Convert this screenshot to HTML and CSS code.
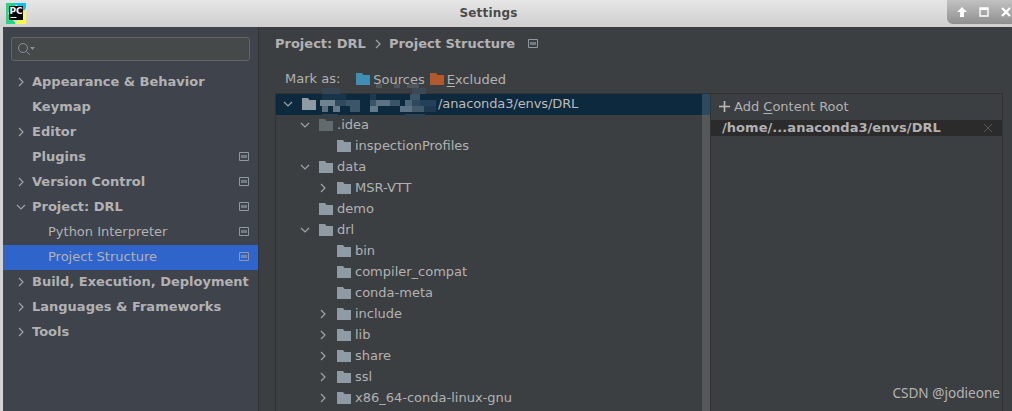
FILE: index.html
```html
<!DOCTYPE html>
<html lang="en">
<head>
    <meta charset="UTF-8">
    <title>Settings</title>
    <link rel="stylesheet" href="styles.css">
</head>
<body>
    <svg class="icon-defs" width="0" height="0">
        <symbol id="folder" viewBox="0 0 14 12"><path d="M0 0H6L7.500 2H14V12H0Z" fill="currentColor"/></symbol>
        <symbol id="right" viewBox="0 0 10 10"><path d="M3 1L7 5L3 9" fill="none" stroke="currentColor" stroke-width="1.2"/></symbol>
        <symbol id="down" viewBox="0 0 10 10"><path d="M1 3L5 7L9 3" fill="none" stroke="currentColor" stroke-width="1.2"/></symbol>
        <symbol id="scope" viewBox="0 0 10 9"><path d="M.5.5H9.5V8.500H.5Z" fill="none" stroke="currentColor"/><path d="M2 3H8V6H2Z" fill="currentColor" opacity=".65"/></symbol>
    </svg>

    <header class="titlebar">
        <svg class="logo" width="20" height="21" viewBox="0 0 20 21">
            <path d="M0 0H12L0 12Z" fill="#21d789"/>
            <path d="M0 8V21H10Z" fill="#21d789"/>
            <path d="M8 0H20V9Z" fill="#07c3f2"/>
            <path d="M20 5V21H9Z" fill="#fcf84a"/>
            <rect x="3" y="3" width="14" height="14" fill="#000"/>
            <text x="3.500" y="11" class="logo-text">PC</text>
            <rect x="4.500" y="14" width="6" height="1" fill="#fff"/>
        </svg>
        <div class="title">Settings</div>
        <div class="window-controls">
            <svg width="12" height="12" viewBox="0 0 12 12"><path d="M6 1L11 6H8V11H4V6H1Z" fill="#fff"/></svg>
            <svg width="12" height="12" viewBox="0 0 12 12"><path d="M2 2H10V10H2Z" fill="none" stroke="#fff" stroke-width="1.4"/><path d="M2 3H10" stroke="#fff" stroke-width="2"/></svg>
            <svg width="12" height="12" viewBox="0 0 12 12"><path d="M2 2L10 10M10 2L2 10" stroke="#fff" stroke-width="2.4"/></svg>
        </div>
    </header>

    <div class="window">
        <aside class="sidebar">
            <div class="search">
                <svg width="18" height="14" viewBox="0 0 18 14"><circle cx="6" cy="6" r="4.500" fill="none" stroke="#8b8e90" stroke-width="1"/><path d="M9.500 9.500L13 13" stroke="#8b8e90"/><path d="M13 5H18L15.500 8Z" fill="#8b8e90"/></svg>
            </div>
            <ul class="nav">
                <li class="nav-row group"><svg class="arrow"><use href="#right"/></svg>Appearance &amp; Behavior</li>
                <li class="nav-row group"><span class="arrow"></span>Keymap</li>
                <li class="nav-row group"><svg class="arrow"><use href="#right"/></svg>Editor</li>
                <li class="nav-row group"><span class="arrow"></span>Plugins<svg class="scope"><use href="#scope"/></svg></li>
                <li class="nav-row group"><svg class="arrow"><use href="#right"/></svg>Version Control<svg class="scope"><use href="#scope"/></svg></li>
                <li class="nav-row group"><svg class="arrow"><use href="#down"/></svg>Project: DRL<svg class="scope"><use href="#scope"/></svg></li>
                <li class="nav-row child">Python Interpreter<svg class="scope"><use href="#scope"/></svg></li>
                <li class="nav-row child selected">Project Structure<svg class="scope"><use href="#scope"/></svg></li>
                <li class="nav-row group"><svg class="arrow"><use href="#right"/></svg>Build, Execution, Deployment</li>
                <li class="nav-row group"><svg class="arrow"><use href="#right"/></svg>Languages &amp; Frameworks</li>
                <li class="nav-row group"><svg class="arrow"><use href="#right"/></svg>Tools</li>
            </ul>
        </aside>

        <main class="content">
            <div class="breadcrumb">
                <span>Project: DRL</span>
                <svg class="crumb-sep"><use href="#right"/></svg>
                <span>Project Structure</span>
                <svg class="scope crumb-scope"><use href="#scope"/></svg>
            </div>

            <div class="markbar">
                <span class="mark-label">Mark as:</span>
                <svg class="folder sources"><use href="#folder"/></svg>
                <span class="mark-sources">Sources</span>
                <svg class="folder excluded"><use href="#folder"/></svg>
                <span><u>E</u>xcluded</span>
            </div>

            <div class="panels">
                <div class="tree">
                    <div class="tree-row root">
                        <svg class="arrow"><use href="#down"/></svg>
                        <svg class="folder"><use href="#folder"/></svg>
                        <span class="root-path">/anaconda3/envs/DRL</span>
                    </div>
                    <div class="tree-row lvl1"><svg class="arrow"><use href="#down"/></svg><svg class="folder dim"><use href="#folder"/></svg>.idea</div>
                    <div class="tree-row lvl2"><span class="arrow"></span><svg class="folder"><use href="#folder"/></svg>inspectionProfiles</div>
                    <div class="tree-row lvl1"><svg class="arrow"><use href="#down"/></svg><svg class="folder"><use href="#folder"/></svg>data</div>
                    <div class="tree-row lvl2"><svg class="arrow"><use href="#right"/></svg><svg class="folder"><use href="#folder"/></svg>MSR-VTT</div>
                    <div class="tree-row lvl1"><span class="arrow"></span><svg class="folder"><use href="#folder"/></svg>demo</div>
                    <div class="tree-row lvl1"><svg class="arrow"><use href="#down"/></svg><svg class="folder"><use href="#folder"/></svg>drl</div>
                    <div class="tree-row lvl2"><span class="arrow"></span><svg class="folder"><use href="#folder"/></svg>bin</div>
                    <div class="tree-row lvl2"><span class="arrow"></span><svg class="folder"><use href="#folder"/></svg>compiler_compat</div>
                    <div class="tree-row lvl2"><span class="arrow"></span><svg class="folder"><use href="#folder"/></svg>conda-meta</div>
                    <div class="tree-row lvl2"><svg class="arrow"><use href="#right"/></svg><svg class="folder"><use href="#folder"/></svg>include</div>
                    <div class="tree-row lvl2"><svg class="arrow"><use href="#right"/></svg><svg class="folder"><use href="#folder"/></svg>lib</div>
                    <div class="tree-row lvl2"><svg class="arrow"><use href="#right"/></svg><svg class="folder"><use href="#folder"/></svg>share</div>
                    <div class="tree-row lvl2"><svg class="arrow"><use href="#right"/></svg><svg class="folder"><use href="#folder"/></svg>ssl</div>
                    <div class="tree-row lvl2"><svg class="arrow"><use href="#right"/></svg><svg class="folder"><use href="#folder"/></svg>x86_64-conda-linux-gnu</div>

                    <!-- pixelated blur over the private part of the path -->
                    <svg class="mosaic" width="130" height="36" viewBox="315 84 130 36">
                        <rect x="322" y="88" width="18" height="6" fill="#37454f"/>
                        <rect x="376" y="84" width="6" height="4" fill="#4f5558"/>
                        <rect x="394" y="84" width="6" height="4" fill="#4f5558"/>
                        <rect x="407" y="84" width="12" height="4" fill="#4f5558"/>
                        <rect x="412" y="88" width="14" height="6" fill="#3b4a55"/>
                        <rect x="322" y="94" width="24" height="6" fill="#18344a"/>
                        <rect x="370" y="94" width="6" height="6" fill="#1d3a50"/>
                        <rect x="410" y="94" width="10" height="6" fill="#3d5367"/>
                        <rect x="320" y="100" width="15" height="6" fill="#6f8391"/>
                        <rect x="335" y="100" width="25" height="6" fill="#2f4a5e"/>
                        <rect x="346" y="100" width="14" height="6" fill="#3c5568"/>
                        <rect x="370" y="100" width="6" height="6" fill="#3a5568"/>
                        <rect x="376" y="100" width="14" height="6" fill="#5d7282"/>
                        <rect x="390" y="100" width="10" height="6" fill="#3a5568"/>
                        <rect x="405" y="100" width="7" height="6" fill="#4d6678"/>
                        <rect x="412" y="100" width="8" height="6" fill="#30485c"/>
                        <rect x="420" y="100" width="16" height="6" fill="#24405a"/>
                        <rect x="322" y="106" width="6" height="6" fill="#5a6f7f"/>
                        <rect x="333" y="106" width="7" height="6" fill="#64798a"/>
                        <rect x="350" y="106" width="10" height="6" fill="#3c5568"/>
                        <rect x="370" y="106" width="8" height="6" fill="#64798a"/>
                        <rect x="400" y="106" width="12" height="6" fill="#5d7282"/>
                        <rect x="412" y="106" width="12" height="6" fill="#44596c"/>
                        <rect x="424" y="106" width="12" height="6" fill="#1f3a50"/>
                        <rect x="322" y="114" width="16" height="4" fill="#353f47"/>
                        <rect x="405" y="114" width="20" height="4" fill="#2f3f4c"/>
                    </svg>
                </div>
                <div class="scrollbar"><div class="thumb"></div></div>
                <div class="roots">
                    <div class="add-root">
                        <svg class="plus" width="11" height="11" viewBox="0 0 11 11"><path d="M5.500 0V11M0 5.500H11" stroke="#bbb" stroke-width="1.600"/></svg>
                        <span>Add <u>C</u>ontent Root</span>
                    </div>
                    <div class="root-entry">
                        <span>/home/...anaconda3/envs/DRL</span>
                        <svg width="10" height="10" viewBox="0 0 10 10"><path d="M1 1L9 9M9 1L1 9" stroke="#55585a" stroke-width="1"/></svg>
                    </div>
                </div>
            </div>
        </main>
    </div>

    <div class="watermark">CSDN @jodieone</div>
</body>
</html>
```

FILE: styles.css
```css
* {
    box-sizing: border-box;
}

html,
body {
    height: 100%;
}

body {
    margin: 0;
    overflow: hidden;
    background: #3c3f41;
    color: #b2b2b2;
    font-family: "DejaVu Sans", sans-serif;
    font-size: 13px;
    display: flex;
    flex-direction: column;
}

.icon-defs {
    position: absolute;
}

u {
    text-underline-offset: 2px;
}

/* title bar */
.titlebar {
    height: 27px;
    flex: none;
    display: flex;
    align-items: flex-start;
    padding-left: 6px;
    background: linear-gradient(#e6e6e6, #cfcfcf);
}

.logo {
    margin-top: 3px;
    flex: none;
}

.logo-text {
    font-size: 9px;
    font-weight: bold;
    fill: #fff;
}

.title {
    flex: 1;
    text-align: center;
    margin-top: 6px;
    padding-left: 4px;
    font-size: 12px;
    font-weight: bold;
    letter-spacing: 0.2px;
    color: #4a4a4a;
}

.window-controls {
    width: 65px;
    height: 24px;
    flex: none;
    display: flex;
    align-items: center;
    gap: 10px;
    padding-left: 9px;
    background: linear-gradient(#c2c2c2, #8f8f8f);
    border-bottom-left-radius: 6px;
}

/* main window */
.window {
    flex: 1;
    min-height: 0;
    display: flex;
    border-left: 3px solid #d4d4d4;
}

.sidebar {
    width: 256px;
    flex: none;
    padding: 10px 8px 0 0;
    background: #3e434c;
    border-right: 1px solid #333539;
}

.search {
    height: 24px;
    margin-left: 8px;
    display: flex;
    align-items: center;
    padding-left: 5px;
    background: #45494a;
    border: 1px solid #646464;
    border-radius: 3px;
}

.nav {
    list-style: none;
    margin: 9px -8px 0 0;
    padding: 0;
}

.nav-row {
    height: 25px;
    display: flex;
    align-items: center;
    padding-right: 9px;
    padding-bottom: 2px;
    white-space: nowrap;
}

.group {
    padding-left: 13px;
    font-weight: bold;
}

.child {
    padding-left: 45px;
}

.selected {
    background: #2f65ca;
}

.arrow {
    width: 10px;
    height: 10px;
    flex: none;
    margin-right: 6px;
    color: #a0a3a5;
}

.scope {
    width: 10px;
    height: 9px;
    margin-left: auto;
    flex: none;
    color: #8f99a3;
}

/* right side */
.content {
    flex: 1;
    min-width: 0;
    padding: 0 9px 0 16px;
}

.breadcrumb {
    height: 34px;
    display: flex;
    align-items: center;
    font-weight: bold;
    padding-bottom: 1px;
}

.crumb-sep {
    width: 10px;
    height: 10px;
    margin: 0 6px 0 7px;
    color: #a0a3a5;
}

.crumb-scope {
    margin-left: 13px;
}

.markbar {
    height: 32px;
    display: flex;
    align-items: flex-end;
    padding: 0 0 4px 10px;
    line-height: 18px;
}

.mark-label {
    margin-right: 16px;
    padding-bottom: 1px;
}

.folder {
    width: 14px;
    height: 12px;
    flex: none;
    margin-right: 4px;
    color: #8e9ba5;
}

.markbar .folder {
    align-self: flex-end;
    margin: 0 3px 4px 0;
}

.sources {
    color: #3f8fb4 !important;
}

.excluded {
    color: #b4592c !important;
}

.mark-sources {
    margin-right: 5px;
}

.panels {
    display: flex;
    height: 318px;
    border: 1px solid #323232;
    border-bottom: none;
}

.tree {
    width: 426px;
    flex: none;
    position: relative;
}

.tree-row {
    height: 21px;
    display: flex;
    align-items: center;
    padding-bottom: 2px;
    white-space: nowrap;
}

.tree-row .arrow {
    margin-right: 9px;
}

.tree-row .folder {
    margin-top: 1px;
}

.root {
    padding-left: 7px;
    background: #0d293e;
}

.root .folder {
    margin-right: 122px;
}

.root-path {
    color: #bbbbbb;
    letter-spacing: -0.1px;
}

.lvl1 {
    padding-left: 24px;
}

.lvl2 {
    padding-left: 42px;
}

.dim {
    color: #636a6d;
}

.mosaic {
    position: absolute;
    left: 39px;
    top: -10px;
}

.scrollbar {
    width: 9px;
    flex: none;
    background: #55585a;
    border-right: 1px solid #323232;
}

.thumb {
    height: 21px;
    background: #2e4a60;
}

.roots {
    flex: 1;
    min-width: 0;
}

.add-root {
    height: 26px;
    display: flex;
    align-items: center;
    padding: 0 0 1px 8px;
}

.plus {
    margin-right: 4px;
}

.root-entry {
    height: 16px;
    display: flex;
    align-items: center;
    justify-content: space-between;
    padding: 0 9px 1px 11px;
    background: #2b2b2c;
    font-weight: bold;
    letter-spacing: 0.05px;
}

.watermark {
    position: absolute;
    right: 12px;
    bottom: 9px;
    font-family: "Noto Sans", sans-serif;
    font-size: 13.600px;
    color: #b4b4b4;
}
```
